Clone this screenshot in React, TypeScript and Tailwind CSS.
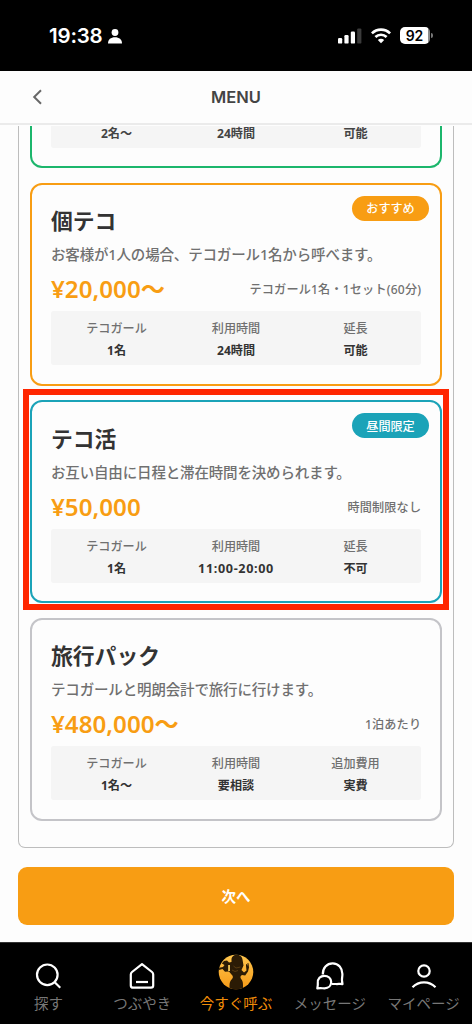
import type { ReactNode } from "react";

type Spec = { label?: string; value: string; wide?: boolean };
type Plan = {
  name: string;
  description: string;
  price: string;
  note: string;
  border: string;
  badge?: { text: string; color: string };
  highlighted?: boolean;
  specs: Spec[];
};

const scrolledSpecs: Spec[] = [{ value: "2名〜" }, { value: "24時間" }, { value: "可能" }];

const plans: Plan[] = [
  {
    name: "個テコ",
    description: "お客様が1人の場合、テコガール1名から呼べます。",
    price: "¥20,000〜",
    note: "テコガール1名・1セット(60分)",
    border: "border-[#f89d13]",
    badge: { text: "おすすめ", color: "bg-[#f89d13]" },
    specs: [
      { label: "テコガール", value: "1名" },
      { label: "利用時間", value: "24時間" },
      { label: "延長", value: "可能" },
    ],
  },
  {
    name: "テコ活",
    description: "お互い自由に日程と滞在時間を決められます。",
    price: "¥50,000",
    note: "時間制限なし",
    border: "border-[#1ba3b8]",
    badge: { text: "昼間限定", color: "bg-[#1ba3b8]" },
    highlighted: true,
    specs: [
      { label: "テコガール", value: "1名" },
      { label: "利用時間", value: "11:00-20:00", wide: true },
      { label: "延長", value: "不可" },
    ],
  },
  {
    name: "旅行パック",
    description: "テコガールと明朗会計で旅行に行けます。",
    price: "¥480,000〜",
    note: "1泊あたり",
    border: "border-[#c4c4c8]",
    specs: [
      { label: "テコガール", value: "1名〜" },
      { label: "利用時間", value: "要相談" },
      { label: "追加費用", value: "実費" },
    ],
  },
];

function StatusBar() {
  return (
    <div className="flex h-[71px] shrink-0 items-center bg-black pl-[49px] pr-[39px] text-white">
      <span className="font-['Inter',sans-serif] text-[20.5px] leading-[24px] font-semibold tracking-[-0.2px]">19:38</span>
      <svg className="ml-[6px] mt-px" width="14" height="15" viewBox="0 0 14 15" fill="currentColor">
        <circle cx="7" cy="3.5" r="3.4" />
        <path d="M0 14.6C0 10.4 2.8 8.3 7 8.3s7 2.1 7 6.3z" />
      </svg>
      <div className="ml-auto flex items-center">
        <svg width="24" height="16" viewBox="0 0 24 16" fill="currentColor">
          <rect x="0" y="10" width="4.2" height="5.6" rx="1.2" />
          <rect x="6.4" y="7" width="4.2" height="8.6" rx="1.2" />
          <rect x="12.8" y="3.6" width="4.2" height="12" rx="1.2" />
          <rect x="19.2" y="0.4" width="4.2" height="15.2" rx="1.2" fill="#3b3b3b" />
        </svg>
        <svg className="ml-[9px]" width="20" height="16" viewBox="0 0 20 16" fill="none" stroke="currentColor" strokeWidth="2.6">
          <path d="M0.9 5.4C5.9 0.3 14.1 0.3 19.1 5.4" />
          <path d="M4.4 9C7.5 5.9 12.5 5.9 15.6 9" />
          <path d="M10 15.2 6.8 12c1.8-1.7 4.6-1.7 6.4 0z" fill="currentColor" stroke="none" />
        </svg>
        <div className="ml-[9px] flex h-[17px] w-[30px] items-center justify-center rounded-[5px] bg-gradient-to-r from-white from-92% to-[#8b8b8b] to-92%">
          <span className="pr-px font-['Inter',sans-serif] text-[14px] leading-[17px] font-semibold text-black">92</span>
        </div>
        <div className="ml-px h-[5px] w-[2px] rounded-r-full bg-[#777]" />
      </div>
    </div>
  );
}

function Header() {
  return (
    <div className="mb-px grid h-[54px] shrink-0 grid-cols-[1fr_auto_1fr] items-center border-b-2 border-[#ebebeb] bg-[#fdfdfd] px-[32px]">
      <svg width="11" height="16" viewBox="0 0 11 16" fill="none" stroke="#686868" strokeWidth="2">
        <path d="M9 1.300 2.200 8 9 14.700" />
      </svg>
      <h1 className="font-['Inter',sans-serif] text-[16.5px] leading-[24px] font-semibold text-[#444]">MENU</h1>
    </div>
  );
}

function ScrolledCard() {
  return (
    <div className="h-[42.3px] shrink-0 rounded-b-[12px] border-x-2 border-b-2 border-[#1cb66c] bg-[#fdfdfd] px-[19px]">
      <div className="grid h-[22px] grid-cols-[132px_107px_132px] justify-center rounded-b-[3px] bg-[#f5f5f5] text-center text-[12.1px] leading-[15px] font-bold text-[#444]">
        {scrolledSpecs.map((spec) => (
          <span key={spec.value}>{spec.value}</span>
        ))}
      </div>
    </div>
  );
}

function PlanCard({ plan }: { plan: Plan }) {
  return (
    <div className="relative shrink-0">
      <div className={`flex h-[203px] flex-col rounded-[12px] border-[2.4px] bg-[#fdfdfd] px-[19px] pt-[20.3px] ${plan.border}`}>
        <h2 className="h-[32px] text-[21.8px] leading-[32px] font-bold text-[#333]">{plan.name}</h2>
        <p className="mt-[6px] h-[22px] text-[14.5px] leading-[22px] font-medium tracking-[-0.16px] whitespace-nowrap text-[#707070]">{plan.description}</p>
        <div className="mt-[8px] flex h-[32px] items-center justify-between whitespace-nowrap">
          <span className="text-[24.2px] leading-[32px] font-semibold text-[#f89d13]">{plan.price}</span>
          <span className="-mr-[0.2px] pt-[2px] text-[12.1px] leading-[18px] font-medium tracking-[0.2px] text-[#707070]">{plan.note}</span>
        </div>
        <div className="mt-[6px] grid h-[54px] grid-cols-[132px_107px_132px] content-center justify-center rounded-[3px] bg-[#f5f5f5] pt-[4px] text-center text-[12.1px]">
          {plan.specs.map((spec) => (
            <div key={spec.value} className="flex flex-col gap-[4px]">
              <span className="leading-[18px] font-medium text-[#707070]">{spec.label}</span>
              <span className={`leading-[18px] font-bold text-[#333] ${spec.wide ? "text-[12.6px] tracking-[0.65px]" : ""}`}>{spec.value}</span>
            </div>
          ))}
        </div>
      </div>
      {plan.badge && (
        <span
          className={`absolute top-[13px] right-[13px] flex h-[25px] w-[77px] items-center justify-center rounded-full pt-[2px] text-[12.1px] leading-[18px] font-medium text-white ${plan.badge.color}`}
        >
          {plan.badge.text}
        </span>
      )}
      {plan.highlighted && <div className="absolute -top-[11px] -right-[7px] -bottom-[7px] -left-[7px] border-[6px] border-[#ff2600]" />}
    </div>
  );
}

function Tab({ label, active, children }: { label: string; active?: boolean; children: ReactNode }) {
  return (
    <div className="flex w-[93.8px] flex-col items-center pt-[12px]">
      <div className="flex h-[38px] items-center justify-center text-white">{children}</div>
      <span className={`-mt-px text-[14.5px] leading-[22px] whitespace-nowrap ${active ? "text-[#f08c08]" : "text-[#777]"}`}>{label}</span>
    </div>
  );
}

function TabBar() {
  return (
    <nav className="flex h-[82px] shrink-0 justify-center border-t border-[#333] bg-black">
      <Tab label="探す">
        <svg className="mt-1" width="26" height="26" viewBox="0 0 26 26" fill="none" stroke="currentColor" strokeWidth="2.2">
          <circle cx="12.300" cy="11.800" r="10.300" />
          <path d="m19.700 19.200 5.600 5.600" />
        </svg>
      </Tab>
      <Tab label="つぶやき">
        <svg className="mt-1" width="26" height="26" viewBox="0 0 26 26" fill="none" stroke="currentColor" strokeWidth="2.2" strokeLinejoin="round">
          <path d="M13 1.2 23 9q1.2 1 1.2 2.5v11q0 2.2-2.2 2.2H4q-2.2 0-2.2-2.2v-11Q1.800 10 3 9z" />
          <path d="M7 19h12" />
        </svg>
      </Tab>
      <Tab label="今すぐ呼ぶ" active>
        <svg className="-mt-[4px]" width="36" height="36" viewBox="0 0 36 36">
          <defs>
            <linearGradient id="sun" x1="0" y1="0" x2="0" y2="1">
              <stop offset="0" stopColor="#ffc64e" />
              <stop offset="1" stopColor="#f59a17" />
            </linearGradient>
            <clipPath id="disc">
              <circle cx="18" cy="18" r="17.3" />
            </clipPath>
          </defs>
          <circle cx="18" cy="18" r="17.3" fill="url(#sun)" />
          <g fill="#2b1b05" clipPath="url(#disc)">
            <path d="M13.500 5.500C13.500 -1 24-1 24.500 5.500l1 6-2 4.500 2.500 2.500 2.500-2-.5-4.500 0-2 .8.300.7 1.700V9l1 .2.500 4.300-1 4-2.800 4-3.200-.5c-2 1.500-2 2.500-.5 4.500 1.500 2 1.500 4 1.500 6v5H11.500v-5c0-2.500.5-4.500 2.500-6.500 1.300-1.500 1.300-3-.5-4.500l-2.500-3-4 .3L4.500 15 1 16v-2.200l4-.8 1.500-2-2.700-1.500L6 7l3-.5 2 2 2.500-.5z" />
          </g>
          <path d="M10.200 11h1.700v6h-1.700z" fill="#ffd35f" />
          <path d="m15.500 12 2.500 2 4.500-1M14 16l3 1.500 3-1" stroke="#75501a" strokeWidth=".6" fill="none" />
        </svg>
      </Tab>
      <Tab label="メッセージ">
        <svg className="mt-1" width="28" height="28" viewBox="0 0 28 28" fill="none" stroke="currentColor" strokeWidth="2.2" strokeLinejoin="round">
          <path d="M6.800 12.500C6.600 6 10.800 1.400 16.700 1.400S26.400 6.200 26.400 12c0 3-.6 4.500-.4 6.500l.5 3.600c-2.500-.6-4 .1-6.500-.1h-4" />
          <path d="M1.300 26.400c.4-2 .7-3.300.5-5.200-.4-4.400 2.600-7.400 6.500-7.400s6.900 2.600 6.900 6.200c0 3.700-2.800 6.300-6.600 6.300-2.500 0-4.400-.3-7.300.1z" />
        </svg>
      </Tab>
      <Tab label="マイページ">
        <svg className="mt-1" width="26" height="26" viewBox="0 0 26 26" fill="none" stroke="currentColor" strokeWidth="2.2">
          <circle cx="13" cy="8" r="5.700" />
          <path d="M1.500 24.300c6.300-6.500 16.700-6.500 23 0" />
        </svg>
      </Tab>
    </nav>
  );
}

export default function App() {
  return (
    <div className="flex h-[1024px] w-[472px] flex-col overflow-hidden bg-[#fdfdfd] font-['Noto_Sans','Noto_Sans_CJK_JP',sans-serif]" lang="ja">
      <StatusBar />
      <Header />
      <main className="mx-[18px] flex h-[722px] shrink-0 flex-col gap-[14.5px] rounded-b-[7px] border-x border-b border-[#bdbdbd] px-[11px]">
        <ScrolledCard />
        {plans.map((plan) => (
          <PlanCard key={plan.name} plan={plan} />
        ))}
      </main>
      <div className="flex flex-1 flex-col px-[18px] pt-[18.5px]">
        <button className="flex h-[58px] items-center justify-center rounded-[9px] bg-[#f89d13] text-[14.5px] leading-[22px] font-bold text-white">次へ</button>
      </div>
      <TabBar />
    </div>
  );
}
